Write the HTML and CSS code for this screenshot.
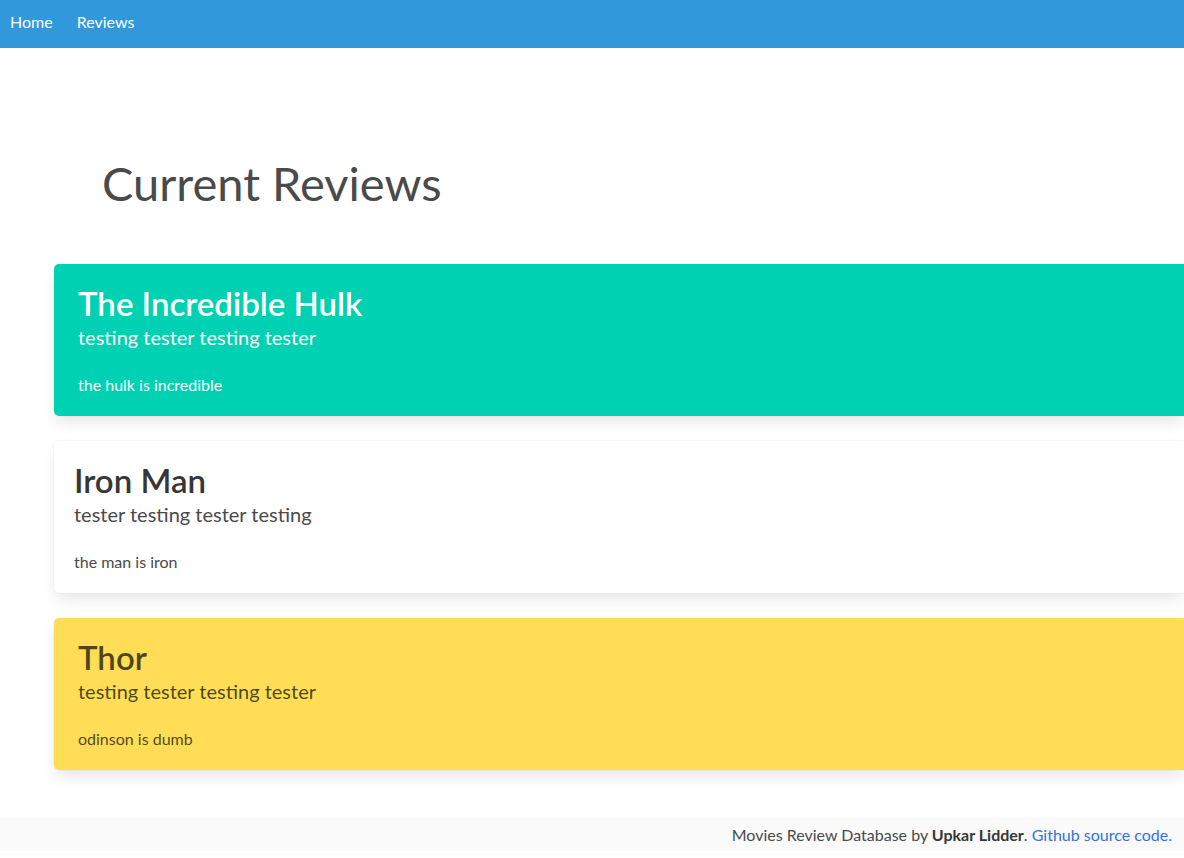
FILE: index.html
```html
<!DOCTYPE html>
<html lang="en">
<head>
<meta charset="utf-8">
<title>Movies Review Database</title>
<link rel="stylesheet" href="styles.css">
</head>
<body>
<nav class="navbar">
  <a class="nav-item" href="#">Home</a>
  <a class="nav-item" href="#">Reviews</a>
</nav>
<main class="content">
  <h1 class="page-title">Current Reviews</h1>
  <div class="cards">
    <section class="card card-primary">
      <h2 class="card-title">The Incredible Hulk</h2>
      <p class="card-subtitle">testing tester testing tester</p>
      <p class="card-body">the hulk is incredible</p>
    </section>
    <section class="card card-white">
      <h2 class="card-title">Iron Man</h2>
      <p class="card-subtitle">tester testing tester testing</p>
      <p class="card-body">the man is iron</p>
    </section>
    <section class="card card-warning">
      <h2 class="card-title">Thor</h2>
      <p class="card-subtitle">testing tester testing tester</p>
      <p class="card-body">odinson is dumb</p>
    </section>
  </div>
</main>
<footer class="footer">
  <span>Movies Review Database by <strong>Upkar Lidder</strong>. <a class="footer-link" href="#">Github source code.</a></span>
</footer>
</body>
</html>
```

FILE: styles.css
```css
* { box-sizing: border-box; }
html, body {
  margin: 0;
  padding: 0;
}
body {
  font-family: "Lato", "Open Sans", sans-serif;
  font-size: 16px;
  line-height: 1.5;
  color: #4a4a4a;
  background: #fff;
}
.navbar {
  display: flex;
  align-items: center;
  gap: 24px;
  height: 48px;
  padding: 0 0 4px 10px;
  background: #3298dc;
}
.nav-item {
  color: #fff;
  text-decoration: none;
  font-size: 16px;
}
.content {
  padding-top: 104px;
  padding-left: 54px;
  height: 770px;
}
.page-title {
  margin: 0 0 50px 48px;
  font-size: 47px;
  font-weight: 400;
  line-height: 62px;
  color: #4a4a4a;
}
.cards {
  display: flex;
  flex-direction: column;
  gap: 25px;
}
.card {
  height: 152px;
  border-radius: 5px 0 0 5px;
  padding: 20px 24px;
  box-shadow: 0 8px 16px -2px rgba(10,10,10,.1), 0 0 0 1px rgba(10,10,10,.02);
}
.card-white { padding-left: 20px; background: #fff; color: #4a4a4a; }
.card-white .card-title { color: #363636; }
.card-primary { background: #00d1b2; color: #fff; }
.card-warning { background: #ffdd57; color: rgba(0,0,0,.7); }
.card-title {
  margin: 0;
  font-size: 33px;
  font-weight: 600;
  line-height: 38px;
}
.card-subtitle {
  margin: 1px 0 22px;
  font-size: 20px;
  line-height: 28px;
}
.card-body {
  margin: 0;
  font-size: 16px;
  line-height: 24px;
}
.footer {
  display: flex;
  justify-content: flex-end;
  height: 33px;
  padding: 5px 12px 0 0;
  background: #fafafa;
  color: #4a4a4a;
  font-size: 16px;
  line-height: 24px;
}
.footer strong { color: #363636; font-weight: 700; }
.footer-link { color: #3273dc; text-decoration: none; }
```
